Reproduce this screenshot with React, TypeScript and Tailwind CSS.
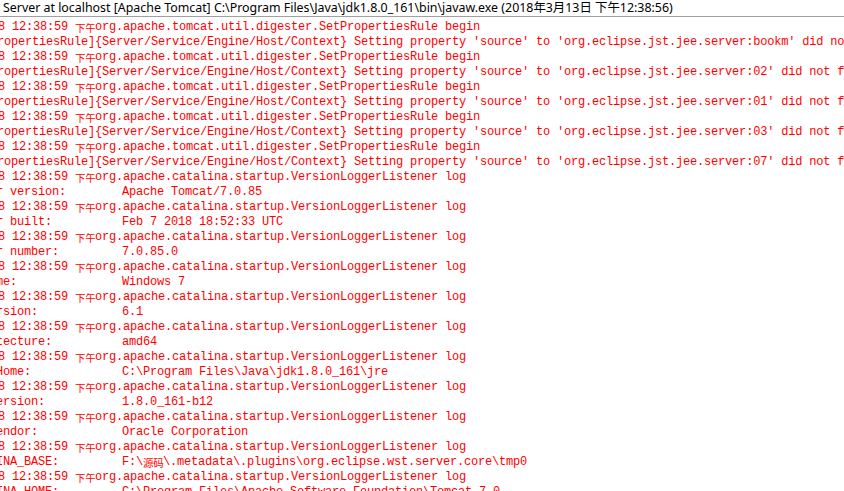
const TS = "8 12:38:59 ";
const RULE_BEGIN = "org.apache.tomcat.util.digester.SetPropertiesRule begin";
const CATALINA = "org.apache.catalina.startup.VersionLoggerListener log";

type Line =
  | { kind: "ts"; msg: string }
  | { kind: "rule"; server: string }
  | { kind: "val"; label: string; value: string };

const lines: Line[] = [
  { kind: "ts", msg: RULE_BEGIN },
  { kind: "rule", server: "bookm" },
  { kind: "ts", msg: RULE_BEGIN },
  { kind: "rule", server: "02" },
  { kind: "ts", msg: RULE_BEGIN },
  { kind: "rule", server: "01" },
  { kind: "ts", msg: RULE_BEGIN },
  { kind: "rule", server: "03" },
  { kind: "ts", msg: RULE_BEGIN },
  { kind: "rule", server: "07" },
  { kind: "ts", msg: CATALINA },
  { kind: "val", label: "r version:", value: "Apache Tomcat/7.0.85" },
  { kind: "ts", msg: CATALINA },
  { kind: "val", label: "r built:", value: "Feb 7 2018 18:52:33 UTC" },
  { kind: "ts", msg: CATALINA },
  { kind: "val", label: "r number:", value: "7.0.85.0" },
  { kind: "ts", msg: CATALINA },
  { kind: "val", label: "me:", value: "Windows 7" },
  { kind: "ts", msg: CATALINA },
  { kind: "val", label: "rsion:", value: "6.1" },
  { kind: "ts", msg: CATALINA },
  { kind: "val", label: "tecture:", value: "amd64" },
  { kind: "ts", msg: CATALINA },
  { kind: "val", label: "Home:", value: "C:\\Program Files\\Java\\jdk1.8.0_161\\jre" },
  { kind: "ts", msg: CATALINA },
  { kind: "val", label: "ersion:", value: "1.8.0_161-b12" },
  { kind: "ts", msg: CATALINA },
  { kind: "val", label: "endor:", value: "Oracle Corporation" },
  { kind: "ts", msg: CATALINA },
  { kind: "val", label: "INA_BASE:", value: "F:\\" },
  { kind: "ts", msg: CATALINA },
  { kind: "val", label: "INA_HOME:", value: "C:\\Program Files\\Apache Software Foundation\\Tomcat 7.0" },
];

function Cjk({ text }: { text: string }) {
  return (
    <span className="inline-block w-[20px] text-[10.5px] leading-[15px] font-['Noto_Sans_CJK_SC',sans-serif] align-top">
      {text}
    </span>
  );
}

function LogLine({ line }: { line: Line }) {
  if (line.kind === "ts") {
    return (
      <div className="h-[15px] -ml-[2px]">
        {TS}
        <Cjk text="下午" />
        {line.msg}
      </div>
    );
  }
  if (line.kind === "rule") {
    return (
      <div className="h-[15px] -ml-[3px]">
        {"ropertiesRule]{Server/Service/Engine/Host/Context} Setting property 'source' to 'org.eclipse.jst.jee.server:" +
          line.server +
          "' did not find a matching property."}
      </div>
    );
  }
  const isBase = line.label === "INA_BASE:";
  return (
    <div className="h-[15px] -ml-[4px]">
      {line.label.padEnd(18, " ")}
      {line.value}
      {isBase && (
        <>
          <Cjk text="源码" />
          {"\\.metadata\\.plugins\\org.eclipse.wst.server.core\\tmp0"}
        </>
      )}
    </div>
  );
}

export default function App() {
  return (
    <div className="w-[844px] h-[491px] overflow-hidden bg-white flex flex-col">
      {/* console title */}
      <div className="h-[17px] shrink-0 border-b border-[#a0a0a0] pl-[3px] flex items-center text-[12.4px] leading-[16px] text-black whitespace-nowrap font-['Noto_Sans','Noto_Sans_CJK_SC',sans-serif]">
        Server at localhost [Apache Tomcat] C:\Program Files\Java\jdk1.8.0_161\bin\javaw.exe (2018年3月13日 下午12:38:56)
      </div>

      {/* console output */}
      <div className="pt-[3px] flex-1 overflow-hidden whitespace-pre text-[#ff0000] text-[12px] leading-[15px] tracking-[-0.2px] font-['Liberation_Mono',monospace]">
        {lines.map((line, i) => (
          <LogLine key={i} line={line} />
        ))}
      </div>
    </div>
  );
}
